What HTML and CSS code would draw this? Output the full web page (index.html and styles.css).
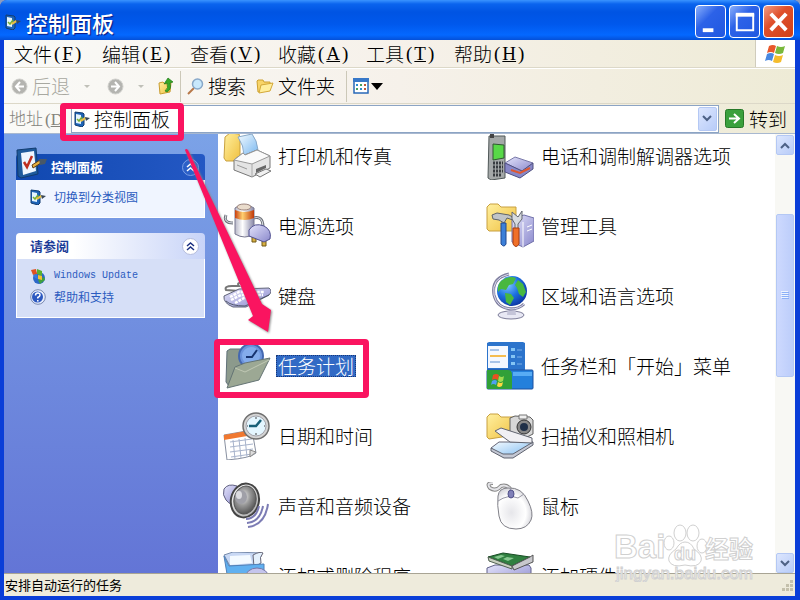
FILE: index.html
```html
<!DOCTYPE html>
<html lang="zh-CN">
<head>
    <meta charset="UTF-8">
    <meta name="viewport" content="width=device-width, initial-scale=1.0">
    <title>控制面板</title>
    <link rel="stylesheet" href="styles.css">
</head>
<body>

<!-- shared gradients and the small panel icon -->
<svg class="defs" width="0" height="0" aria-hidden="true">
    <defs>
        <linearGradient id="yellow" x1="0" y1="0" x2="1" y2="1"><stop offset="0" stop-color="#fff0a0"/><stop offset="1" stop-color="#f0c040"/></linearGradient>
        <linearGradient id="purple" x1="0" y1="0" x2="1" y2="1"><stop offset="0" stop-color="#e4e4fb"/><stop offset="1" stop-color="#8a88cc"/></linearGradient>
        <linearGradient id="paper" x1="0" y1="0" x2="1" y2="1"><stop offset="0" stop-color="#f4fbff"/><stop offset="1" stop-color="#7ab8f0"/></linearGradient>
        <linearGradient id="grey" x1="0" y1="0" x2="1" y2="1"><stop offset="0" stop-color="#ffffff"/><stop offset="1" stop-color="#a8a8a8"/></linearGradient>
        <linearGradient id="metal" x1="0" y1="0" x2="1" y2="0"><stop offset="0" stop-color="#b8b8c8"/><stop offset=".4" stop-color="#ffffff"/><stop offset="1" stop-color="#8888a8"/></linearGradient>
        <linearGradient id="red" x1="0" y1="0" x2="1" y2="0"><stop offset="0" stop-color="#c84010"/><stop offset=".4" stop-color="#ffd070"/><stop offset="1" stop-color="#c03808"/></linearGradient>
        <radialGradient id="ocean" cx=".35" cy=".3" r=".8"><stop offset="0" stop-color="#7cc8ff"/><stop offset=".5" stop-color="#1c70e0"/><stop offset="1" stop-color="#0a2c98"/></radialGradient>
        <radialGradient id="cone" cx=".4" cy=".4" r=".6"><stop offset="0" stop-color="#f2f2f2"/><stop offset=".5" stop-color="#9a9a9a"/><stop offset="1" stop-color="#5c5c5c"/></radialGradient>
        <radialGradient id="shell" cx=".4" cy=".6" r=".7"><stop offset="0" stop-color="#e6e6ea"/><stop offset=".6" stop-color="#ffffff"/><stop offset="1" stop-color="#c4c4cc"/></radialGradient>
        <symbol id="panel" viewBox="0 0 32 32">
            <path d="M1 3l19-2 2 26-17 4-3-2z" fill="#1e5a9c" stroke="#123c70"/>
            <path d="M5 6l13-2 2 20-13 4z" fill="#eef6ff"/>
            <path d="M8 15l3 5 5-11" fill="none" stroke="#c03020" stroke-width="2.5"/>
            <path d="M16 18l8-5 1 3-8 5z" fill="#e8b040" stroke="#604018"/>
            <path d="M23 12l8 0-2 5-5 1z" fill="#485868"/>
        </symbol>
        <symbol id="small-panel" viewBox="0 0 16 16">
            <path d="M1 1l8 1 1 1v11l-2 2-7-2z" fill="#1e64b8" stroke="#123c70"/>
            <path d="M2 3l5 1v9l-5-1z" fill="#e4f4ff"/>
            <path d="M3 8l2 2 3-4" fill="none" stroke="#78b030" stroke-width="1.500"/>
            <path d="M6 9l5-3 1 2-5 3z" fill="#e8c040"/>
            <path d="M11 6l5 1-4 3z" fill="#384858"/>
        </symbol>
    </defs>
</svg>

<div class="window">
    <header class="title-bar">
        <svg class="title-icon"><use href="#small-panel"/></svg>
        <h1>控制面板</h1>
        <div class="window-buttons">
            <button type="button" aria-label="最小化"><svg viewBox="0 0 30 30"><path d="M7 22h11v4H7z" fill="#fff"/></svg></button>
            <button type="button" aria-label="最大化"><svg viewBox="0 0 30 30"><path d="M7 8h17v16H7z" fill="none" stroke="#fff" stroke-width="2"/><path d="M6 6h19v4H6z" fill="#fff"/></svg></button>
            <button type="button" class="close" aria-label="关闭"><svg viewBox="0 0 30 30"><path d="M7 7l16 17M23 7L7 24" stroke="#fff" stroke-width="4"/></svg></button>
        </div>
    </header>

    <nav class="menu-bar">
        <button type="button">文件<span>(<u>F</u>)</span></button>
        <button type="button">编辑<span>(<u>E</u>)</span></button>
        <button type="button">查看<span>(<u>V</u>)</span></button>
        <button type="button">收藏<span>(<u>A</u>)</span></button>
        <button type="button">工具<span>(<u>T</u>)</span></button>
        <button type="button">帮助<span>(<u>H</u>)</span></button>
        <div class="flag">
            <svg width="22" height="20" viewBox="0 0 22 20">
                <path d="M4 2q4-2 7 0l-2 7q-3-2-7 0z" fill="#e8582c"/>
                <path d="M12 2q4 2 8 0l-2 7q-4 2-8 0z" fill="#78b83c"/>
                <path d="M2 10q4-2 7 0l-2 7q-3-2-7 0z" fill="#4888e0"/>
                <path d="M10 11q4 2 8 0l-2 7q-4 2-8 0z" fill="#f4bc2c"/>
            </svg>
        </div>
    </nav>

    <div class="toolbar">
        <button type="button" class="back" disabled>
            <svg width="17" height="17" viewBox="0 0 17 17"><circle cx="8.500" cy="8.500" r="7.500" fill="#b4b4b0" stroke="#d0d0cc"/><path d="M9 4L5 8.500 9 13M5 8.500h8" fill="none" stroke="#fff" stroke-width="2"/></svg>
            后退
            <i class="drop"></i>
        </button>
        <button type="button" class="forward" aria-label="前进" disabled>
            <svg width="17" height="17" viewBox="0 0 17 17"><circle cx="8.500" cy="8.500" r="7.500" fill="#b4b4b0" stroke="#d0d0cc"/><path d="M8 4l4 4.500L8 13M12 8.500H4" fill="none" stroke="#fff" stroke-width="2"/></svg>
            <i class="drop"></i>
        </button>
        <button type="button" class="up" aria-label="向上">
            <svg width="16" height="18" viewBox="0 0 16 18"><path d="M1 6l4-1 2 2 6-1-1 9-10 2z" fill="url(#yellow)" stroke="#c89c30"/><path d="M7 14q4-3 2-8l-3 1 4-6 5 4-3 1q2 6-3 9z" fill="#38a828" stroke="#1c7814" stroke-width=".7"/></svg>
        </button>
        <span class="divider"></span>
        <button type="button" class="search">
            <svg width="17" height="17" viewBox="0 0 17 17"><path d="M7 10l-6 6" stroke="#b87848" stroke-width="2"/><circle cx="10.500" cy="6" r="5" fill="#c8e8fc" stroke="#88a8c8" stroke-width="1.500"/></svg>
            搜索
        </button>
        <button type="button" class="folders">
            <svg width="18" height="16" viewBox="0 0 18 16"><path d="M1 3l1-1h5l1 2h6v4L3 14H2z" fill="#f8d468" stroke="#cca030"/><path d="M5 7l12-2-3 8-11 2z" fill="#ffee9c" stroke="#d4a838"/></svg>
            文件夹
        </button>
        <span class="divider"></span>
        <button type="button" class="views" aria-label="查看">
            <svg width="30" height="16" viewBox="0 0 30 16"><rect x="1" y="1" width="14" height="14" fill="#fff" stroke="#2868b8" stroke-width="1.500"/><path d="M0 0h16v4H0z" fill="#3878c8"/><path d="M3 6h2v2H3zM7 10h2v2H7z" fill="#2c8cd0"/><path d="M7 6h2v2H7zM3 10h2v2H3z" fill="#48a060"/><path d="M11 6h2v2h-2zM11 10h2v2h-2z" fill="#c05838"/><path d="M18 5h12l-6 7z" fill="#000"/></svg>
        </button>
    </div>

    <form class="address-bar">
        <label for="address">地址<span>(<u>D</u></span></label>
        <div class="address-box">
            <svg class="address-icon"><use href="#small-panel"/></svg>
            <input type="text" id="address" value="控制面板">
            <button type="button" class="arrow-button" aria-label="展开"><svg width="10" height="7" viewBox="0 0 10 7"><path d="M1 1l4 4 4-4" fill="none" stroke="#4d6185" stroke-width="2"/></svg></button>
        </div>
        <button type="button" class="go">
            <svg width="19" height="19" viewBox="0 0 19 19"><rect x=".5" y=".5" width="18" height="18" rx="2" fill="#3aa03c" stroke="#267828"/><path d="M4 9.500h10M9 5l5 4.500L9 14" fill="none" stroke="#fff" stroke-width="2"/></svg>
            转到
        </button>
    </form>

    <div class="content">
        <aside class="sidebar">
            <section class="task-box primary">
                <h2>
                    <svg class="box-icon"><use href="#panel"/></svg>
                    控制面板
                    <button type="button" aria-label="折叠"><svg width="19" height="19" viewBox="0 0 19 19"><circle cx="9.500" cy="9.500" r="8" fill="#2c60c8" stroke="#7c9ee4"/><path d="M6 9l3.500-3L13 9M6 13l3.500-3L13 13" fill="none" stroke="#fff" stroke-width="1.500"/></svg></button>
                </h2>
                <ul>
                    <li><svg class="link-icon"><use href="#small-panel"/></svg><a href="#">切换到分类视图</a></li>
                </ul>
            </section>
            <section class="task-box">
                <h2>
                    请参阅
                    <button type="button" aria-label="折叠"><svg width="19" height="19" viewBox="0 0 19 19"><circle cx="9.500" cy="9.500" r="8" fill="#fff" stroke="#b4bcdc"/><path d="M6 9l3.500-3L13 9M6 13l3.500-3L13 13" fill="none" stroke="#1c3080" stroke-width="1.500"/></svg></button>
                </h2>
                <ul>
                    <li>
                        <svg class="link-icon" viewBox="0 0 16 16"><circle cx="9" cy="10" r="6" fill="#2c68c8"/><path d="M8 12l6-3 1 3-5 4z" fill="#40a040"/><path d="M1 2l5-1 1 5-4 1z" fill="#e05020"/><path d="M7 1l5 2v5L7 6z" fill="#58b030"/><path d="M3 7l4-1 1 5-3-1z" fill="#3878e0"/><path d="M8 7l4 1v4L8 11z" fill="#f4c030"/></svg>
                        <a href="#" class="latin">Windows Update</a>
                    </li>
                    <li>
                        <svg class="link-icon" viewBox="0 0 16 16"><circle cx="8" cy="8" r="7.300" fill="#e8eefc" stroke="#7888b0"/><circle cx="7.500" cy="8" r="5.500" fill="#2c58c0"/><path d="M5.500 6.500q0-2.500 2.300-2.500t2.200 2q0 1.300-2.200 2.500v1M7.800 11v1.500" fill="none" stroke="#fff" stroke-width="1.500"/></svg>
                        <a href="#">帮助和支持</a>
                    </li>
                </ul>
            </section>
        </aside>

        <main class="list-view">
            <div class="items">
                <a href="#">
                    <svg viewBox="0 0 48 48"><path d="M2 5l5-4 9 1 1 4v20l-4 3H3L1 26z" fill="url(#yellow)" stroke="#c8a040"/><path d="M15 5l14-3q5 6 6 16l-14 5q0-9-6-18z" fill="url(#paper)" stroke="#88a8c8"/><path d="M11 28l9-7 2 2 12-5 13 6v12L29 45l-18-7z" fill="#e4e4e4" stroke="#777"/><path d="M11 28l9-7 2 2 12-5 13 6-18 8z" fill="#fafafa" stroke="#999"/><path d="M29 32v13" stroke="#aaa"/><path d="M33 37l10-4v3l-10 5z" fill="#666"/><path d="M32 42l11-5 5 2-11 6z" fill="#f0f0f0" stroke="#777"/><path d="M14 33l10 4" stroke="#999"/></svg>
                    <span>打印机和传真</span>
                </a>
                <a href="#">
                    <svg viewBox="0 0 48 48"><path d="M3 4h16v42l-14 2-3-2z" fill="#a4a8a8" stroke="#505858"/><path d="M4 0h4v6H4z" fill="#444"/><path d="M7 12l11 1v13l-11 2z" fill="#58d848" stroke="#305830"/><path d="M7 31h10M7 35h10M7 39h10M7 43h8" stroke="#383c40" stroke-width="3" stroke-dasharray="2 1"/><path d="M19 31l10-6 18 6-11 8z" fill="url(#purple)" stroke="#7878a8"/><path d="M19 31l17 8 11-8v6l-13 9-15-6z" fill="#8888c8" stroke="#505080"/><path d="M25 38l9 3 10-5" stroke="#e05830" stroke-width="2" fill="none"/></svg>
                    <span>电话和调制解调器选项</span>
                </a>
                <a href="#">
                    <svg viewBox="0 0 48 48"><path d="M3 13q-3 8 7 8M30 16q10-3 10 9" fill="none" stroke="#70747c" stroke-width="3"/><path d="M3 13q-3 8 7 8M30 16q10-3 10 9" fill="none" stroke="#d8dce4" stroke-width="1"/><path d="M12 6q9-7 19 0v26q-9 6-19 0z" fill="url(#metal)" stroke="#787890"/><path d="M12 8q9 4 19 0v8q-9 4-19 0z" fill="url(#red)"/><ellipse cx="21" cy="5" rx="7" ry="3" fill="#eadccc" stroke="#a08880"/><path d="M29 32v8h4v-7M39 34v10h4V34" fill="#d8b040" stroke="#705818"/><path d="M26 28q5-8 15-4 8 4 6 13l-6 3-15-6z" fill="url(#purple)" stroke="#505090"/></svg>
                    <span>电源选项</span>
                </a>
                <a href="#">
                    <svg viewBox="0 0 48 48"><path d="M1 5l3-3h8l3 3h15v21l-3 3H3l-2-2z" fill="url(#yellow)" stroke="#c8a040"/><path d="M26 17l12-4 10 3v23l-11 6-11-5z" fill="url(#purple)" stroke="#7070a8"/><path d="M37 20v25M41 25l5-2M41 29l5-2" stroke="#fff"/><path d="M6 13l5-2 12 2q4 1 4 5l-6-2-3 5-5-3-6-1z" fill="#c0c4c8" stroke="#606468"/><path d="M15 21h5v21q-2 4-5 0z" fill="#3c80d8" stroke="#204890"/><path d="M26 10v7l3 5v6h3v-6l4-5V9l-4 6z" fill="#d8dce0" stroke="#646870"/><path d="M27 26h6v16q-3 5-6 0z" fill="#f07028" stroke="#a83c10"/></svg>
                    <span>管理工具</span>
                </a>
                <a href="#">
                    <svg viewBox="0 0 48 48"><path d="M16 19L3 18q-2-4 6-4h7q-3-4 4-3" fill="none" stroke="#777" stroke-width="2"/><path d="M1 24l15-7 30-1q4 3 0 7L23 35H10Q0 31 1 24z" fill="url(#purple)" stroke="#606478"/><path d="M7 25l9-5h25M8 28l10-5h22M12 31l9-5h14" stroke="#fff" stroke-width="2.500" stroke-dasharray="3 1" fill="none"/><path d="M3 29q5 5 19 5l24-11" fill="none" stroke="#50586c"/></svg>
                    <span>键盘</span>
                </a>
                <a href="#">
                    <svg viewBox="0 0 48 48"><ellipse cx="25" cy="43" rx="13" ry="4" fill="#e8e8f4" stroke="#7c7c98"/><path d="M22 35h7l1 8h-9z" fill="#c4c4d8"/><path d="M23 2Q5 6 8 23q3 13 17 14 8 0 13-5" fill="none" stroke="#8080a0" stroke-width="3"/><path d="M23 2Q5 6 8 23q3 13 17 14 8 0 13-5" fill="none" stroke="#dcdcf0"/><circle cx="26" cy="19" r="15" fill="url(#ocean)"/><path d="M15 9q7-6 15-3l-3 6-4 1-3 5-5-1-3 3q-1-7 3-11zM32 8l5 4 3 8-3 5-4-3-2-6-2-3zM19 21l6 1 3 4-4 7-4-3z" fill="#48b840"/></svg>
                    <span>区域和语言选项</span>
                </a>
                <a href="#" class="selected">
                    <svg viewBox="0 0 48 48"><path d="M4 9l3-2h10l4 3h17v9L6 44l-3-4z" fill="#8c9a8c" stroke="#607078"/><circle cx="28" cy="14" r="12" fill="#6c94dc" stroke="#4468b0" stroke-width="2"/><circle cx="28" cy="14" r="9" fill="#84acec"/><path d="M34 8l-5 7h-6" fill="none" stroke="#183470" stroke-width="2"/><path d="M12 25l10-4 25-5-11 22-32 8z" fill="#9ca894" stroke="#647474"/><path d="M12 26l10 4 24-12" fill="none" stroke="#c0c8b4"/></svg>
                    <span>任务计划</span>
                </a>
                <a href="#">
                    <svg viewBox="0 0 48 48"><path d="M1 1l2-1h34l2 1v28H1z" fill="#2c74cc"/><path d="M2 4h20v22H2z" fill="#f4f8ff"/><path d="M4 8h9M4 20h10" stroke="#a8c4e8" stroke-width="2"/><path d="M4 14h16" stroke="#f4bc50" stroke-width="2"/><path d="M25 6h4v3h-4zM25 13h4v3h-4zM25 20h4v3h-4z" fill="#84c4f4"/><path d="M31 8h5M31 15h5M31 22h5" stroke="#7cb0e8"/><rect x="1" y="28" width="46" height="19" rx="1" fill="#2480dc" stroke="#1c50a0"/><path d="M1 28h21q4 0 4 5v14H1z" fill="#30a038"/><path d="M7 33q3-2 6 0l-1 5q-3-2-6 0z" fill="#e85020"/><path d="M13 34q3 2 5 0l-1 5q-3 2-5 0z" fill="#a0dc50"/><path d="M6 39q3-2 5 0l-1 4q-3-2-5 0z" fill="#50a0f0"/><path d="M12 40q3 2 5 0l-1 4q-3 2-5 0z" fill="#ffd840"/><path d="M27 30h19v4H27z" fill="#58acf4"/></svg>
                    <span>任务栏和「开始」菜单</span>
                </a>
                <a href="#">
                    <svg viewBox="0 0 48 48"><path d="M1 23l28-5 4 23q-5 5-29 7z" fill="#fff" stroke="#8890a0"/><path d="M1 23l28-5 1 5-29 5z" fill="#f07830"/><path d="M7 30l22-3M7 35l23-3M7 40l23-3M8 45l21-3M10 28l2 19M16 27l2 19M22 26l2 19" stroke="#a8b4cc"/><path d="M27 38l6 2-6 5z" fill="#dcdcdc" stroke="#888"/><circle cx="33" cy="14" r="13" fill="#d4d4d4" stroke="#707070" stroke-width="1.500"/><circle cx="33" cy="14" r="10" fill="#e4f6ff" stroke="#a4a4ac"/><path d="M38 8l-5 6h-7" fill="none" stroke="#186078" stroke-width="2.500"/><path d="M33 5v2M33 21v2M24 14h1M41 14h1" stroke="#444"/></svg>
                    <span>日期和时间</span>
                </a>
                <a href="#">
                    <svg viewBox="0 0 48 48"><path d="M1 5l3-3h8l3 3h14v18l-26 4-2-2z" fill="url(#yellow)" stroke="#c8a040"/><path d="M24 6l5-2 15 1 3 3v14l-6 3-17-3z" fill="#d8d8d8" stroke="#606060"/><path d="M33 3h8v4h-8z" fill="#eee" stroke="#777"/><circle cx="38" cy="15" r="7" fill="#888" stroke="#333"/><circle cx="38" cy="15" r="4" fill="#203048"/><path d="M5 36l8-6h34l-20 15H17z" fill="url(#paper)" stroke="#667"/><path d="M5 36v3l13 7h9l20-13v-3L27 42H17z" fill="#c4c8d4" stroke="#606470"/><path d="M9 19l6-3 31 10v5l-22-1z" fill="#f0f0f4" stroke="#606470"/></svg>
                    <span>扫描仪和照相机</span>
                </a>
                <a href="#">
                    <svg viewBox="0 0 48 48"><path d="M1 7q4-6 13-3l4 18q-10 3-15-4-4-5-2-11z" fill="url(#purple)" stroke="#606080"/><ellipse cx="22" cy="18.500" rx="14" ry="17" transform="rotate(12 22 18)" fill="url(#grey)" stroke="#444" stroke-width="2"/><ellipse cx="22" cy="18" rx="11" ry="14" transform="rotate(12 22 18)" fill="url(#cone)" stroke="#555"/><ellipse cx="18" cy="15" rx="6" ry="7" fill="#a0a0a8"/><ellipse cx="16" cy="13" rx="3" ry="4" fill="#dcdce0"/><path d="M23 37q10 0 13-13M24 41q13-1 16-17M25 45q17-2 20-23" fill="none" stroke="#7c7cb4" stroke-width="2"/></svg>
                    <span>声音和音频设备</span>
                </a>
                <a href="#">
                    <svg viewBox="0 0 48 48"><path d="M25 8q-4-6-10-4-5 6-11 2-4-5 3-5" fill="none" stroke="#888" stroke-width="4"/><path d="M25 8q-4-6-10-4-5 6-11 2-4-5 3-5" fill="none" stroke="#e4e4e8" stroke-width="2"/><path d="M12 14q1-8 10-8 14-1 20 13 6 12 3 19-4 9-15 9-15 0-17-13-2-11-1-20z" fill="url(#shell)" stroke="#808088"/><path d="M12 19q10-7 20-3l6-4M24 6l1 5" fill="none" stroke="#9898a4"/><ellipse cx="25" cy="12" rx="3" ry="4" fill="#8080b8" stroke="#505088"/></svg>
                    <span>鼠标</span>
                </a>
                <a href="#">
                    <svg viewBox="0 0 48 48"><path d="M1 3l9-3 29 1-4 12-28 1z" fill="#c8d8f4" stroke="#788cac"/><path d="M7 4l20-1 2 8-22 2z" fill="#f4faff"/><path d="M30 3q7-4 10-2-4 4-2 10l-7 4z" fill="#e4f0fc" stroke="#667"/><path d="M1 4l5 10 35-2v22H6z" fill="#60b0f0" stroke="#5080b8"/><ellipse cx="34" cy="26" rx="12" ry="10" fill="#c4c4ec" stroke="#7878a8"/></svg>
                    <span>添加或删除程序</span>
                </a>
                <a href="#">
                    <svg viewBox="0 0 48 48"><path d="M1 16l8-3h34l2 3v16H1z" fill="url(#purple)" stroke="#606088"/><path d="M2 5l15-4 27 4-18 9z" fill="#308040" stroke="#184c24"/><path d="M2 5l24 9v3L3 9z" fill="#c8d0c0" stroke="#506050"/><path d="M26 14l18-9 3-2v7l-19 8z" fill="#c8c8cc" stroke="#555"/><path d="M8 5l7-2 4 1-7 3zM21 5l7 1-6 3-5-2z" fill="#88c890"/></svg>
                    <span>添加硬件</span>
                </a>
            </div>
        </main>

        <div class="scrollbar">
            <button type="button" class="arrow-button" aria-label="向上滚动"><svg width="10" height="7" viewBox="0 0 10 7"><path d="M1 6l4-4 4 4" fill="none" stroke="#4d6185" stroke-width="2"/></svg></button>
            <div class="track">
                <div class="thumb"><svg width="8" height="8" viewBox="0 0 8 8"><path d="M0 .5h7M0 2.500h7M0 4.500h7M0 6.500h7" stroke="#eef4fe"/><path d="M1 1.500h7M1 3.500h7M1 5.500h7M1 7.500h7" stroke="#8cb0f8"/></svg></div>
            </div>
            <button type="button" class="arrow-button" aria-label="向下滚动"><svg width="10" height="7" viewBox="0 0 10 7"><path d="M1 1l4 4 4-4" fill="none" stroke="#4d6185" stroke-width="2"/></svg></button>
        </div>
    </div>

    <footer class="status-bar">
        安排自动运行的任务
        <svg width="13" height="13" viewBox="0 0 13 13"><path d="M9 1h3v3H9zM5 5h3v3H5zM9 5h3v3H9zM1 9h3v3H1zM5 9h3v3H5zM9 9h3v3H9z" fill="#c4c0ac"/></svg>
    </footer>

    <!-- red marks drawn over the window -->
    <svg class="marks" width="400" height="420" viewBox="0 0 400 420" aria-hidden="true">
        <rect x="63" y="106" width="118" height="32" rx="1"/>
        <rect x="217" y="342" width="149" height="53" rx="1"/>
        <path d="M185 150q1-2 3 0L262 304l9 6-3 22-20-12 5-4z"/>
    </svg>

    <svg class="watermark" width="150" height="70" viewBox="0 0 150 70" aria-hidden="true">
        <g class="outline">
            <text x="0" y="46" class="brand">Bai</text>
            <ellipse cx="55" cy="31" rx="5" ry="7"/>
            <ellipse cx="66" cy="21" rx="6" ry="8"/>
            <ellipse cx="79" cy="21" rx="6" ry="8"/>
            <ellipse cx="88" cy="34" rx="5" ry="7"/>
            <path d="M71 30q6 0 9 7 9 6 7 12-3 7-16 4-13 3-16-4-2-6 7-12 4-7 9-7z"/>
            <text x="60" y="48" class="du">du</text>
            <text x="91" y="46" class="product">经验</text>
            <text x="2" y="67" class="site">jingyan.baidu.com</text>
        </g>
    </svg>
</div>

</body>
</html>
```

FILE: styles.css
```css
* {
    box-sizing: border-box;
}
body {
    margin: 0;
    background-color: #8a9cc0;
    font-family: "Noto Sans CJK SC", sans-serif;
    font-size: 19px;
    font-weight: 300;
    line-height: 24px;
    color: #000;
}
button {
    display: flex;
    align-items: center;
    padding: 0;
    border: none;
    background: none;
    font: inherit;
    color: inherit;
    white-space: nowrap;
}
svg {
    display: block;
    flex: none;
}
.defs {
    position: absolute;
}

/* window */
.window {
    position: relative;
    display: flex;
    flex-direction: column;
    height: 100vh;
    padding: 0 5px 4px 4px;
    border-radius: 7px 7px 0 0;
    background-color: #0a3ed8;
    overflow: hidden;
}

/* title bar */
.title-bar {
    display: flex;
    align-items: center;
    height: 40px;
    margin: 0 -5px 0 -4px;
    padding: 3px 6px 0 5px;
    background: linear-gradient(#3a94ff 0, #0a64ee 4px, #0054e3 12px, #0058ec 24px, #0468ff 35px, #0450d8 40px);
}
.title-icon {
    width: 16px;
    height: 16px;
}
.title-bar h1 {
    flex: 1;
    margin: 0 0 0 5px;
    font-size: 22px;
    font-weight: 500;
    color: #fff;
    text-shadow: 1px 1px 1px #0a1883;
}
.window-buttons {
    display: flex;
    gap: 3px;
}
.window-buttons button {
    width: 31px;
    height: 33px;
    border: 1px solid #fff;
    border-radius: 4px;
    background: linear-gradient(135deg, #8ab0fc, #2c62e8 40%, #2058e0);
    justify-content: center;
}
.window-buttons svg {
    width: 29px;
    height: 29px;
}
.window-buttons .close {
    background: linear-gradient(135deg, #f09c84, #e0502c 40%, #d04018);
}

/* menu, toolbar and address */
.menu-bar, .toolbar, .address-bar {
    display: flex;
    align-items: center;
    background: linear-gradient(to right, #fafaf7, #f6f1ea 50%, #eeebd6);
}
.menu-bar {
    height: 28px;
    padding-left: 10px;
    border-bottom: 1px solid #dcd8c8;
}
.menu-bar button {
    width: 88px;
}
.menu-bar span, .address-bar label span {
    padding-left: 2px;
    font-family: "Liberation Serif", serif;
    font-weight: 400;
}
.menu-bar u {
    margin: 0 2px;
}
.flag {
    display: flex;
    align-items: center;
    justify-content: center;
    align-self: stretch;
    width: 40px;
    margin-left: auto;
    border-left: 1px solid #d0ccbc;
    background-color: #fff;
}
.toolbar {
    height: 36px;
    padding-left: 7px;
    border-top: 1px solid #fff;
    border-bottom: 1px solid #dcd8c8;
}
.toolbar button {
    gap: 4px;
}
.toolbar .back, .toolbar .forward {
    color: #a8a8a0;
}
.toolbar .forward {
    margin-left: 17px;
}
.toolbar .up {
    margin-left: 14px;
}
.drop {
    margin-left: 10px;
    border: 3px solid transparent;
    border-top-color: #c0c0b8;
    border-bottom: none;
}
.divider {
    width: 1px;
    height: 31px;
    margin: 0 6px;
    background-color: #ccc8b8;
}
.toolbar .folders {
    margin: 0 5px 0 10px;
}
.address-bar {
    height: 30px;
    border-bottom: 1px solid #a8b8d0;
}
.address-bar label {
    width: 67px;
    padding-left: 5px;
    font-size: 17px;
    color: #84847c;
    white-space: nowrap;
}
.address-box {
    display: flex;
    flex: 1;
    align-items: center;
    height: 28px;
    padding: 1px;
    border: 1px solid #8ca4c4;
    background-color: #fff;
}
.address-icon {
    width: 16px;
    height: 16px;
    margin: 0 4px 0 1px;
}
.address-box input {
    flex: 1;
    min-width: 0;
    height: 24px;
    padding: 0;
    border: none;
    outline: none;
    background: none;
    font: inherit;
}
.arrow-button {
    width: 19px;
    height: 24px;
    justify-content: center;
    border: 1px solid #b4c8f4;
    border-radius: 2px;
    background: linear-gradient(135deg, #dce6fe, #b8ccf8);
}
.go {
    gap: 5px;
    margin: 0 8px 0 6px;
}

/* content */
.content {
    display: flex;
    flex: 1;
    min-height: 0;
    background-color: #fff;
}
.sidebar {
    display: flex;
    flex-direction: column;
    gap: 15px;
    width: 214px;
    padding: 20px 13px 0 12px;
    background: linear-gradient(#7ba2e7, #6375d6);
}
.task-box h2 {
    display: flex;
    align-items: center;
    height: 26px;
    margin: 0;
    padding: 0 5px 0 14px;
    border-radius: 4px 4px 0 0;
    background: linear-gradient(to right, #fff 30%, #c8d4f8);
    font-size: 13px;
    font-weight: 700;
    color: #1c3c98;
}
.task-box h2 button {
    margin-left: auto;
}
.task-box ul {
    margin: 0;
    padding: 6px 0 10px 13px;
    border: 1px solid #fff;
    border-top: none;
    background-color: #d6dff7;
    list-style: none;
}
.task-box li {
    display: flex;
    align-items: center;
    gap: 8px;
    height: 21px;
}
.task-box a {
    font-size: 12px;
    font-weight: 400;
    color: #2c5cc0;
    text-decoration: none;
}
.task-box a.latin {
    font-family: "Liberation Mono", monospace;
    font-size: 10px;
}
.link-icon {
    width: 16px;
    height: 16px;
}
.primary h2 {
    padding-left: 0;
    background: linear-gradient(to right, #1048b0, #2458c4);
    color: #fff;
}
.primary ul {
    background-color: #f0f5ff;
}
.box-icon {
    width: 32px;
    height: 34px;
    margin: -8px 3px 0 0;
}

/* item list */
.list-view {
    flex: 1;
    min-width: 0;
    overflow: hidden;
}
.items {
    display: grid;
    grid-template-columns: 263px 1fr;
    grid-auto-rows: 70px;
    margin-top: -13px;
    padding-left: 5px;
}
.items a {
    display: flex;
    align-items: center;
    gap: 5px;
    color: #000;
    text-decoration: none;
    white-space: nowrap;
}
.items svg {
    width: 48px;
    height: 48px;
}
.items span {
    padding: 0 1px;
    border: 1px solid transparent;
    line-height: 20px;
}
.items .selected span {
    border: 1px dotted #183878;
    background-color: #316ac5;
    color: #fff;
}

/* scrollbar */
.scrollbar {
    display: flex;
    flex-direction: column;
    width: 20px;
    padding: 1px 1px 0 1px;
    background-color: #f8f8f4;
}
.scrollbar .arrow-button {
    width: 18px;
    height: 20px;
}
.track {
    flex: 1;
    padding-top: 59px;
}
.thumb {
    display: flex;
    align-items: center;
    justify-content: center;
    height: 48%;
    border: 1px solid #b4c8f4;
    border-radius: 2px;
    background: linear-gradient(to right, #cdd9fe, #bccdfa);
}

/* status bar */
.status-bar {
    display: flex;
    align-items: center;
    justify-content: space-between;
    height: 23px;
    padding: 0 1px;
    border-top: 1px solid #a8a494;
    background-color: #eeebdc;
    font-size: 13px;
    font-weight: 400;
}

/* overlays */
.marks {
    position: absolute;
    top: 0;
    left: 0;
    pointer-events: none;
}
.marks rect {
    fill: none;
    stroke: #fa1460;
    stroke-width: 6px;
}
.marks path {
    fill: #fa1460;
    filter: drop-shadow(1px 1px 1px #888);
}
.watermark {
    position: absolute;
    right: 36px;
    bottom: 18px;
    pointer-events: none;
}
.outline {
    fill: #fff;
    stroke: #d0d0d0;
    stroke-width: 1px;
    font-family: "Liberation Sans", sans-serif;
}
.brand {
    font-size: 33px;
    font-weight: 700;
}
.du {
    font-size: 18px;
    font-weight: 700;
}
.product {
    font-family: "Noto Sans CJK SC", sans-serif;
    font-size: 24px;
    font-weight: 700;
}
.site {
    font-size: 17px;
    font-weight: 400;
}
```
